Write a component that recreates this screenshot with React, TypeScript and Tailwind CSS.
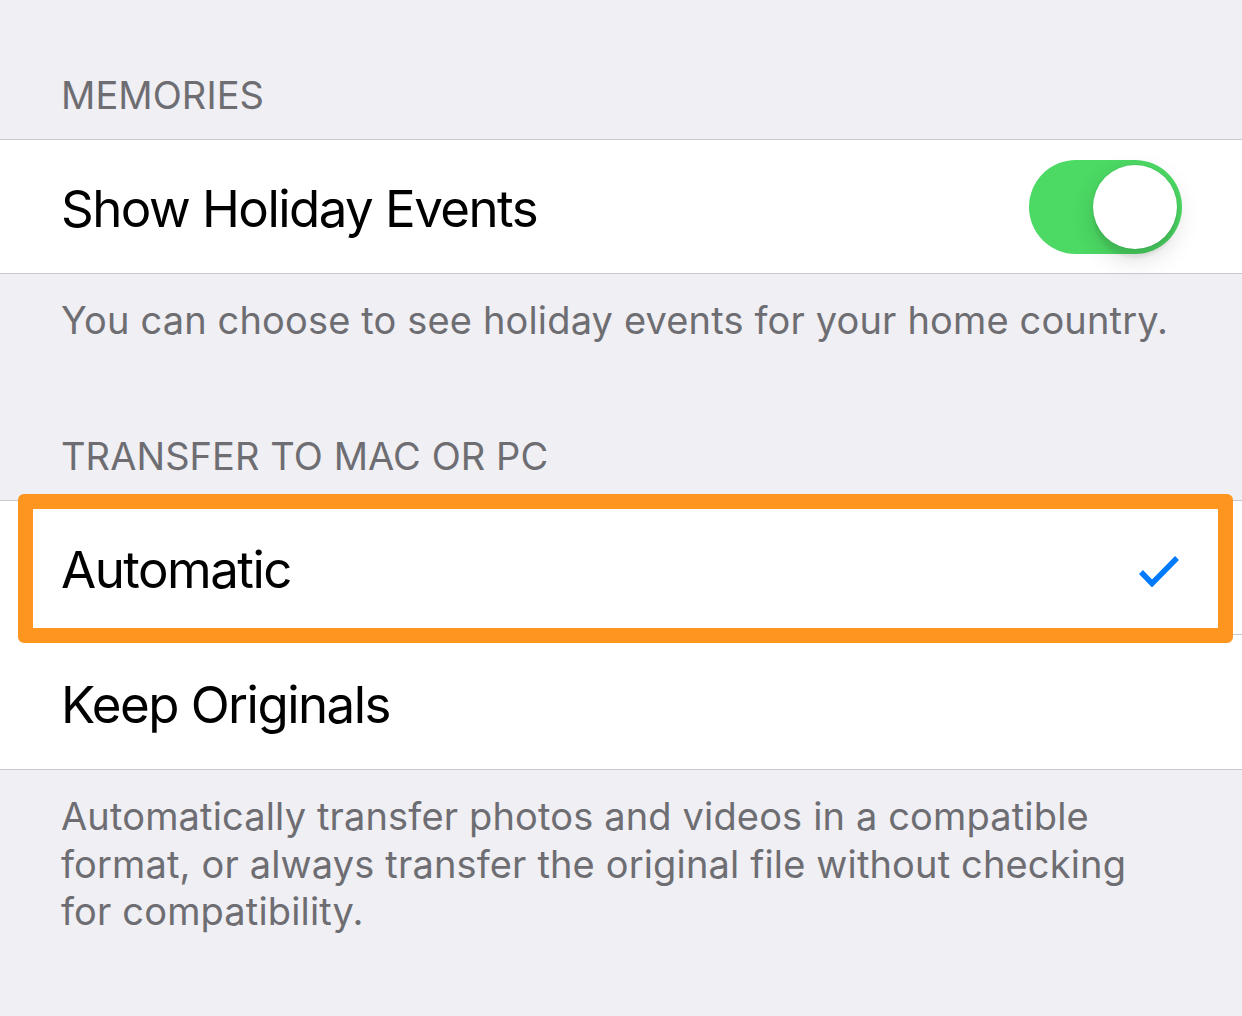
import React from 'react';

const FONT = "font-['Inter','Noto_Sans',sans-serif]";

function SectionHeader({ title, top }: { title: string; top: string }) {
  return (
    <div className={`${top} pb-[20px] pl-[61px] text-[38px] leading-[48px] tracking-[0.002em] text-[#6d6d72] uppercase`}>
      {title}
    </div>
  );
}

function Toggle() {
  return (
    <div className="relative w-[153px] h-[94px] rounded-full bg-[#4cd964] shrink-0">
      <div className="absolute right-[5px] top-[5px] w-[84px] h-[84px] rounded-full bg-white shadow-[0_9px_24px_rgba(0,0,0,0.15),0_9px_3px_rgba(0,0,0,0.06),0_0_0_1px_rgba(0,0,0,0.04)]" />
    </div>
  );
}

function Check() {
  return (
    <svg width="40" height="32" viewBox="0 0 40 32" className="shrink-0">
      <path d="M2 17 L13 28.5 L38 3" fill="none" stroke="#007aff" strokeWidth="5.5" strokeLinejoin="miter" />
    </svg>
  );
}

export default function App() {
  return (
    <div className={`${FONT} min-h-screen w-[1242px] bg-[#efeff4]`}>
      {/* Memories */}
      <SectionHeader title="Memories" top="pt-[71px]" />
      <div className="bg-white border-y border-[#c8c7cc]">
        <div className="h-[133px] flex items-center justify-between pl-[61px] pr-[60px] pt-[6px]">
          <span className="text-[51px] tracking-[-0.03em] text-black">Show Holiday Events</span>
          <div className="-mt-[6px]">
            <Toggle />
          </div>
        </div>
      </div>
      <div className="pt-[22px] pl-[61px] text-[38px] leading-[48px] tracking-[0.004em] text-[#6d6d72] whitespace-nowrap">
        You can choose to see holiday events for your home country.
      </div>

      {/* Transfer to Mac or PC */}
      <SectionHeader title="Transfer to Mac or PC" top="pt-[88px]" />
      <div className="bg-white border-y border-[#c8c7cc]">
        <div className="relative h-[133px] flex items-center justify-between pl-[61px] pr-[63px] pt-[6px]">
          <span className="text-[51px] tracking-[-0.03em] text-black">Automatic</span>
          <Check />
          {/* highlight frame */}
          <div className="absolute -top-[7px] -bottom-[9px] left-[18px] right-[9px] border-[15px] border-[#fe951f] rounded-[6px] pointer-events-none" />
        </div>
        <div className="ml-[62px] h-px bg-[#c8c7cc]" />
        <div className="h-[134px] flex items-center pl-[61px] pt-[6px]">
          <span className="text-[51px] tracking-[-0.03em] text-black">Keep Originals</span>
        </div>
      </div>
      <div className="pt-[23px] pl-[61px] text-[38px] leading-[47.5px] tracking-[0.004em] text-[#6d6d72] whitespace-nowrap">
        Automatically transfer photos and videos in a compatible
        <br />
        format, or always transfer the original file without checking
        <br />
        for compatibility.
      </div>
    </div>
  );
}
